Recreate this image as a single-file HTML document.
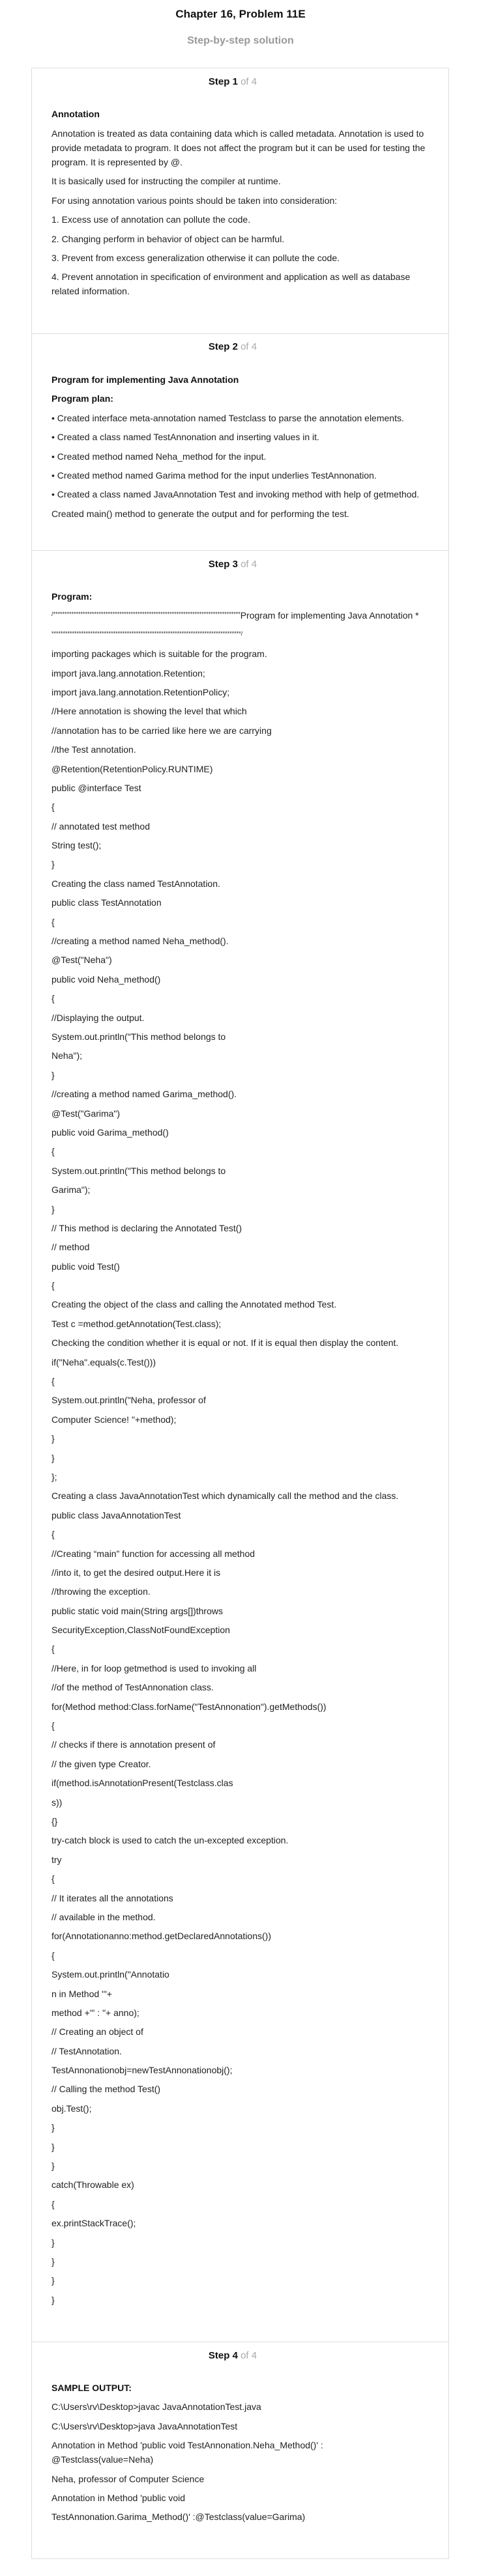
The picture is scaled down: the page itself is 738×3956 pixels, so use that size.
<!DOCTYPE html>
<html><head><meta charset="utf-8">
<style>
*{margin:0;padding:0;box-sizing:border-box}
body{width:738px;height:3956px;background:#fff;font-family:"Liberation Sans",Arial,sans-serif;color:#222;position:relative;overflow:hidden}
.t{position:absolute;left:0;width:738px;text-align:center;font-weight:bold}
.card{position:absolute;left:48px;top:104px;width:641px;height:3826px;border:1px solid #ddd}
.div{position:absolute;left:48px;width:641px;height:1px;background:#ddd}
.st{position:absolute;left:0;width:714px;text-align:center;font-size:15px;font-weight:bold;color:#111;line-height:20px}
.st span{font-weight:normal;color:#aaa}
.blk{position:absolute;left:79px;width:590px;font-size:14px;line-height:22px;color:#222}
.blk p{margin-bottom:7.4px}
.blk h4{font-size:14px;font-weight:bold;margin-bottom:7.4px;line-height:22px;color:#111}
.small{font-size:9px;letter-spacing:0;vertical-align:top;line-height:18px}
</style></head><body>
<div class="t" style="top:11px;font-size:17px;line-height:22px;color:#111">Chapter 16, Problem 11E</div>
<div class="t" style="top:52px;font-size:16px;line-height:22px;color:#999">Step-by-step solution</div>
<div class="card"></div>
<div class="st" style="top:116px">Step 1 <span>of 4</span></div>
<div class="blk" style="top:164px">
<h4 style="margin-bottom:8px">Annotation</h4>
<p>Annotation is treated as data containing data which is called metadata. Annotation is used to provide metadata to program. It does not affect the program but it can be used for testing the program. It is represented by @.</p>
<p>It is basically used for instructing the compiler at runtime.</p>
<p>For using annotation various points should be taken into consideration:</p>
<p>1. Excess use of annotation can pollute the code.</p>
<p>2. Changing perform in behavior of object can be harmful.</p>
<p>3. Prevent from excess generalization otherwise it can pollute the code.</p>
<p>4. Prevent annotation in specification of environment and application as well as database related information.</p>
</div>
<div class="div" style="top:512px"></div>
<div class="st" style="top:523px">Step 2 <span>of 4</span></div>
<div class="blk" style="top:572px">
<h4>Program for implementing Java Annotation</h4>
<h4>Program plan:</h4>
<p>• Created interface meta-annotation named Testclass to parse the annotation elements.</p>
<p>• Created a class named TestAnnonation and inserting values in it.</p>
<p>• Created method named Neha_method for the input.</p>
<p>• Created method named Garima method for the input underlies TestAnnonation.</p>
<p>• Created a class named JavaAnnotation Test and invoking method with help of getmethod.</p>
<p>Created main() method to generate the output and for performing the test.</p>
</div>
<div class="div" style="top:845px"></div>
<div class="st" style="top:857px">Step 3 <span>of 4</span></div>
<div class="blk" style="top:905px">
<h4>Program:</h4>
<p><span class="small">/**********************************************************************************</span>Program for implementing Java Annotation *</p>
<p><span class="small">***********************************************************************************/</span></p>
<p>importing packages which is suitable for the program.</p>
<p>import java.lang.annotation.Retention;</p>
<p>import java.lang.annotation.RetentionPolicy;</p>
<p>//Here annotation is showing the level that which</p>
<p>//annotation has to be carried like here we are carrying</p>
<p>//the Test annotation.</p>
<p>@Retention(RetentionPolicy.RUNTIME)</p>
<p>public @interface Test</p>
<p>{</p>
<p>// annotated test method</p>
<p>String test();</p>
<p>}</p>
<p>Creating the class named TestAnnotation.</p>
<p>public class TestAnnotation</p>
<p>{</p>
<p>//creating a method named Neha_method().</p>
<p>@Test("Neha")</p>
<p>public void Neha_method()</p>
<p>{</p>
<p>//Displaying the output.</p>
<p>System.out.println("This method belongs to</p>
<p>Neha");</p>
<p>}</p>
<p>//creating a method named Garima_method().</p>
<p>@Test("Garima")</p>
<p>public void Garima_method()</p>
<p>{</p>
<p>System.out.println("This method belongs to</p>
<p>Garima");</p>
<p>}</p>
<p>// This method is declaring the Annotated Test()</p>
<p>// method</p>
<p>public void Test()</p>
<p>{</p>
<p>Creating the object of the class and calling the Annotated method Test.</p>
<p>Test c =method.getAnnotation(Test.class);</p>
<p>Checking the condition whether it is equal or not. If it is equal then display the content.</p>
<p>if("Neha".equals(c.Test()))</p>
<p>{</p>
<p>System.out.println("Neha, professor of</p>
<p>Computer Science! "+method);</p>
<p>}</p>
<p>}</p>
<p>};</p>
<p>Creating a class JavaAnnotationTest which dynamically call the method and the class.</p>
<p>public class JavaAnnotationTest</p>
<p>{</p>
<p>//Creating “main” function for accessing all method</p>
<p>//into it, to get the desired output.Here it is</p>
<p>//throwing the exception.</p>
<p>public static void main(String args[])throws</p>
<p>SecurityException,ClassNotFoundException</p>
<p>{</p>
<p>//Here, in for loop getmethod is used to invoking all</p>
<p>//of the method of TestAnnonation class.</p>
<p>for(Method method:Class.forName("TestAnnonation").getMethods())</p>
<p>{</p>
<p>// checks if there is annotation present of</p>
<p>// the given type Creator.</p>
<p>if(method.isAnnotationPresent(Testclass.clas</p>
<p>s))</p>
<p>{}</p>
<p>try-catch block is used to catch the un-excepted exception.</p>
<p>try</p>
<p>{</p>
<p>// It iterates all the annotations</p>
<p>// available in the method.</p>
<p>for(Annotationanno:method.getDeclaredAnnotations())</p>
<p>{</p>
<p>System.out.println("Annotatio</p>
<p>n in Method '"+</p>
<p>method +"' : "+ anno);</p>
<p>// Creating an object of</p>
<p>// TestAnnotation.</p>
<p>TestAnnonationobj=newTestAnnonationobj();</p>
<p>// Calling the method Test()</p>
<p>obj.Test();</p>
<p>}</p>
<p>}</p>
<p>}</p>
<p>catch(Throwable ex)</p>
<p>{</p>
<p>ex.printStackTrace();</p>
<p>}</p>
<p>}</p>
<p>}</p>
<p>}</p>
</div>
<div class="div" style="top:3596px"></div>
<div class="st" style="top:3608px">Step 4 <span>of 4</span></div>
<div class="blk" style="top:3656px">
<h4>SAMPLE OUTPUT:</h4>
<p>C:\Users\rv\Desktop&gt;javac JavaAnnotationTest.java</p>
<p>C:\Users\rv\Desktop&gt;java JavaAnnotationTest</p>
<p>Annotation in Method 'public void TestAnnonation.Neha_Method()' :<br>@Testclass(value=Neha)</p>
<p>Neha, professor of Computer Science</p>
<p>Annotation in Method 'public void</p>
<p>TestAnnonation.Garima_Method()' :@Testclass(value=Garima)</p>
</div>
</body></html>
